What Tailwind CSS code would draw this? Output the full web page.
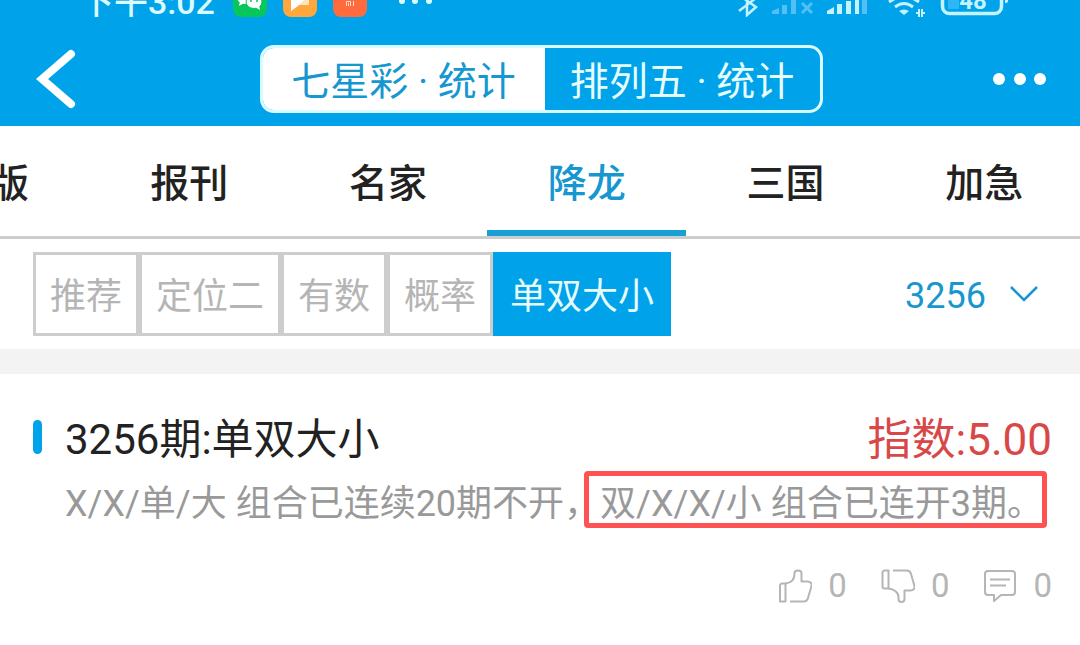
<!DOCTYPE html>
<html lang="zh-CN">

<head>
    <meta charset="UTF-8" />
    <meta name="viewport" content="width=device-width, initial-scale=1.0" />
    <title>七星彩 · 统计</title>
    <script src="https://cdn.jsdelivr.net/npm/@tailwindcss/browser@4"></script>
</head>

<body class="min-h-screen bg-white font-[Roboto,'Noto_Sans_CJK_SC',sans-serif] text-[#222] overflow-x-hidden">
    <header class="bg-[#00a2ea] text-white">
        <!-- Status bar -->
        <div class="h-[17px] flex items-end justify-between overflow-hidden pl-[80px] pr-[71px] text-[#d9fbff]">
            <div class="flex items-end">
                <span class="w-[137px] text-[34px] leading-[30px] font-medium whitespace-nowrap">下午3:02</span>
                <div class="flex items-end gap-4 ml-4">
                    <svg class="w-[34px] h-[34px]" viewBox="0 0 34 34">
                        <rect width="34" height="34" rx="8" fill="#07c65b" />
                        <ellipse cx="12" cy="14" rx="8" ry="7" fill="#fff" />
                        <path d="M7 18l-1 5 5-3z" fill="#fff" />
                        <ellipse cx="21" cy="19" rx="8" ry="6.500" fill="#fff" stroke="#07c65b" />
                        <path d="M22 24l5 3-1-5z" fill="#fff" />
                        <circle cx="18" cy="18" r="1" fill="#07c65b" />
                        <circle cx="24" cy="18" r="1" fill="#07c65b" />
                    </svg>
                    <svg class="w-[34px] h-[34px]" viewBox="0 0 34 34">
                        <rect width="34" height="34" rx="8" fill="#ffa73c" />
                        <path d="M8 8h18v14H16l-8 6z" fill="#ffe3bd" />
                        <path d="M8 28V12l14 4-6 6z" fill="#fff" />
                    </svg>
                    <svg class="w-[34px] h-[34px]" viewBox="0 0 34 34">
                        <rect width="34" height="34" rx="8" fill="#ff6b3d" />
                        <path d="M13.500 23v-4.500h4V23M15.500 20v3M20.500 18v5" fill="none" stroke="#ffe0d5" />
                    </svg>
                </div>
                <svg class="w-[34px] h-[17px] ml-[31px]" viewBox="0 0 34 17" fill="currentColor">
                    <circle cx="4" cy="1" r="3" />
                    <circle cx="17" cy="1" r="3" />
                    <circle cx="31" cy="1" r="3" />
                </svg>
            </div>
            <svg class="w-[272px] h-[17px] shrink-0" viewBox="737 0 272 17" fill="none">
                <!-- Bluetooth -->
                <path d="M739 11l17-13M747-8V15L756 7 739-5" stroke="#c4f3ff" stroke-width="2.500" />
                <!-- Signal without service -->
                <path d="M772 14v-3l7-3v6zM782 5h5v9h-5zM791 0h5v14h-5z" fill="#55bff5" />
                <path d="M802 3l10 10M812 3l-10 10" stroke="#55bff5" stroke-width="3" />
                <!-- Signal -->
                <path d="M827 14v-3l7-4v7zM837 4h5v10h-5zM846 1h5v13h-5zM855 0h4v14h-4z" fill="#c4f3ff" />
                <path d="M862 0h5v14h-5z" fill="#55bff5" />
                <!-- Wi-Fi -->
                <path d="M889 2q15-11 30 0M895 7q9-7 18 0" stroke="#c4f3ff" stroke-width="3" />
                <path d="M899 11q5-3 10 0l-5 4z" fill="#c4f3ff" />
                <path d="M919 9v8M916 13h3M922 9v8M922 13h3" stroke="#c4f3ff" stroke-width="2" />
                <!-- Battery -->
                <rect x="948" y="-14" width="11" height="23" fill="#2fb6f5" />
                <rect x="942.500" y="-18" width="59" height="31.500" rx="7" stroke="#c4f3ff" stroke-width="3.500" />
                <path d="M1005-6h1a2 2 0 0 1 2 2v5a2 2 0 0 1-2 2h-1z" fill="#c4f3ff" />
                <text x="973" y="9" text-anchor="middle" font-size="24" font-weight="700" fill="#c4f3ff">48</text>
            </svg>
        </div>

        <!-- Title bar -->
        <div class="flex items-center justify-between pt-7 pb-[13px] pl-9 pr-[34px]">
            <button type="button" aria-label="返回" class="w-[180px]">
                <svg class="w-10 h-[60px]" viewBox="0 0 40 60" fill="none" stroke="currentColor" stroke-width="8">
                    <path d="M35 5L6 30l29 25" stroke-linecap="round" stroke-linejoin="miter" />
                </svg>
            </button>
            <div class="flex h-[68px] rounded-[14px] border-3 border-[#d9fbff] overflow-hidden text-[39px] leading-[56px]">
                <button type="button" class="w-[282px] pt-1.5 bg-white text-[#1697d0] whitespace-nowrap">七星彩 · 统计</button>
                <button type="button" class="w-[275px] pt-1.5 text-[#e6fdff] whitespace-nowrap">排列五 · 统计</button>
            </div>
            <button type="button" aria-label="更多" class="w-[180px] flex justify-end">
                <svg class="w-[54px] h-3" viewBox="0 0 54 12" fill="currentColor">
                    <circle cx="7" cy="6" r="6" />
                    <circle cx="28" cy="6" r="6" />
                    <circle cx="48" cy="6" r="6" />
                </svg>
            </button>
        </div>
    </header>

    <!-- Channel tabs -->
    <nav class="flex h-[113px] border-b-3 border-[#cdcdcd] overflow-hidden text-[39px] leading-[116px] font-medium text-center whitespace-nowrap">
        <a href="#" class="w-[90px] shrink-0 -indent-2.5 text-left">版</a>
        <a href="#" class="w-[18.4%] shrink-0">报刊</a>
        <a href="#" class="w-[18.4%] shrink-0">名家</a>
        <a href="#" class="w-[18.4%] h-[110px] shrink-0 border-b-6 border-[#189fd6] text-[#1697d0]">降龙</a>
        <a href="#" class="w-[18.4%] shrink-0">三国</a>
        <a href="#" class="w-[18.4%] shrink-0">加急</a>
    </nav>

    <!-- Filters -->
    <div class="flex items-center justify-between pt-[13px] pb-[13px] pl-[33px] pr-[42px]">
        <div class="flex text-4xl leading-[72px] text-[#b5b5b5] whitespace-nowrap">
            <button type="button" class="border-3 border-[#cdcdcd] px-3.5 pt-1.5">推荐</button>
            <button type="button" class="border-3 border-[#cdcdcd] px-3.5 pt-1.5">定位二</button>
            <button type="button" class="border-3 border-[#cdcdcd] px-3.5 pt-1.5">有数</button>
            <button type="button" class="border-3 border-[#cdcdcd] px-3.5 pt-1.5">概率</button>
            <button type="button" class="border-3 border-[#00a2ea] bg-[#00a2ea] px-3.5 pt-1.5 text-[#e6fdff]">单双大小</button>
        </div>
        <div class="flex items-center gap-6 text-[#1697d0]">
            <select aria-label="期号" class="appearance-none bg-transparent pt-1 text-4xl leading-[52px]">
                <option>3256</option>
            </select>
            <svg class="w-7 h-4" viewBox="0 0 28 16" fill="none" stroke="currentColor" stroke-width="2.500">
                <path d="M1 1l13 13L27 1" />
            </svg>
        </div>
    </div>

    <div class="h-[25px] bg-[#f3f3f3]"></div>

    <!-- Forecast -->
    <main class="pl-[33px] pr-7 pt-[30px]">
        <article>
            <div class="flex items-center justify-between whitespace-nowrap">
                <div class="flex items-center gap-[23px]">
                    <span class="w-[9px] h-[34px] rounded-full bg-[#00a2ea]"></span>
                    <h1 class="pt-1.5 text-[42px] leading-[60px]">3256期:单双大小</h1>
                </div>
                <span class="pt-1.5 text-[44px] leading-[60px] text-[#d94848]">指数:5.00</span>
            </div>
            <p class="pl-8 text-4xl leading-[68px] text-[#999] whitespace-nowrap">X/X/单/大 组合已连续20期不开，<span class="relative">双/X/X/小 组合已连开3期。<span class="absolute -left-4 -right-1 -top-3 h-[57px] rounded border-[5px] border-[#ff5252]"></span></span></p>

            <div class="flex justify-end gap-[34px] pt-6 text-[33px] leading-[48px] text-[#b5b5b5]">
                <button type="button" aria-label="赞" class="flex items-center gap-4">
                    <svg class="w-[34px] h-[34px]" viewBox="0 0 34 34" fill="none" stroke="currentColor" stroke-width="2" stroke-linejoin="round">
                        <path d="M7.500 32.500H2V16.500a2 2 0 0 1 2-2h3.500z" />
                        <path d="M7.500 14.500C13 14 16.500 10.500 16.500 5V4c0-3.500 7-3.500 7 0v8.500h6c3 0 4.500 2 4 4.500L30 29c-.7 2.500-2 3.500-4 3.500H12" />
                    </svg>
                    <span>0</span>
                </button>
                <button type="button" aria-label="踩" class="flex items-center gap-4">
                    <svg class="w-[34px] h-[34px]" viewBox="0 0 34 34" fill="none" stroke="currentColor" stroke-width="2" stroke-linejoin="round">
                        <path d="M7.500 1.500H3.500a2 2 0 0 0-2 2V17.500a2 2 0 0 0 2 2h4z" />
                        <path d="M7.500 19.500C13 20 17.500 23.500 17.500 28v2c0 4 6 4 6 0v-8.500h6c3 0 4.500-2 4-4.500L30 5c-.7-2.500-2-3.500-4-3.500H12" />
                    </svg>
                    <span>0</span>
                </button>
                <button type="button" aria-label="评论" class="flex items-center gap-4">
                    <svg class="w-[34px] h-[34px]" viewBox="0 0 34 34" fill="none" stroke="currentColor" stroke-width="2" stroke-linejoin="round">
                        <path d="M5 2h24a3 3 0 0 1 3 3v18a3 3 0 0 1-3 3H18l-7 6v-6H5a3 3 0 0 1-3-3V5a3 3 0 0 1 3-3z" />
                        <path d="M7 10.500h20M7 16.500h16" />
                    </svg>
                    <span>0</span>
                </button>
            </div>
        </article>
    </main>
</body>

</html>
